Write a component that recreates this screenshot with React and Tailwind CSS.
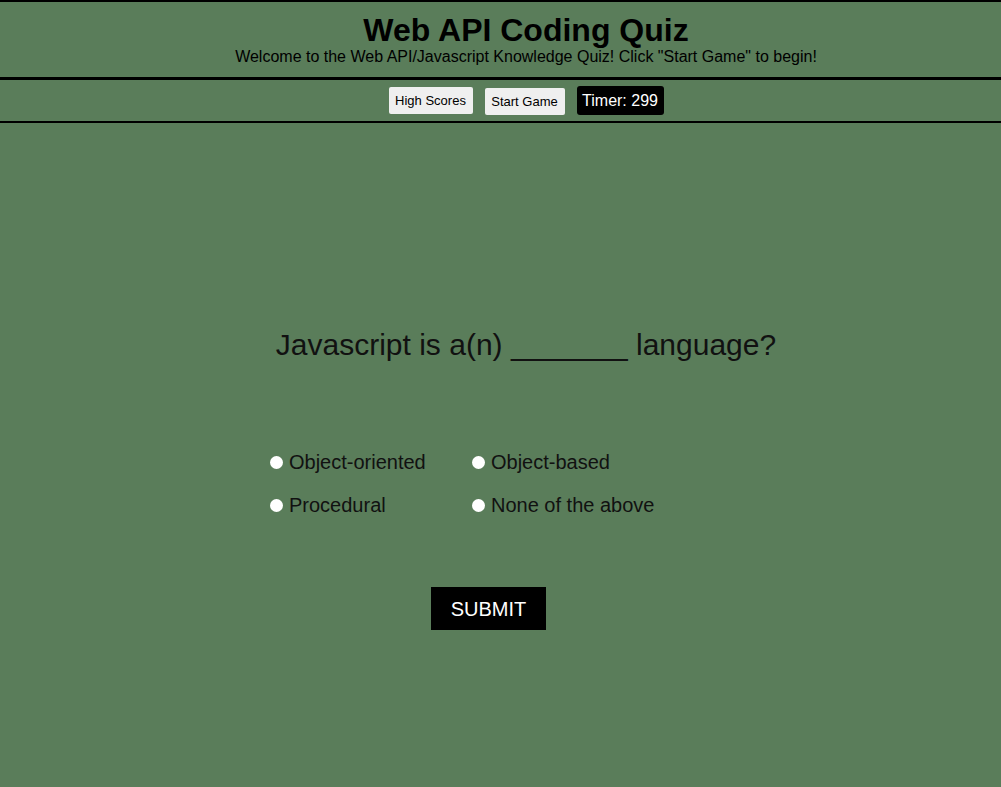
import React, { useState } from "react";

const options = [
  ["a", "Object-oriented"],
  ["b", "Object-based"],
  ["c", "Procedural"],
  ["d", "None of the above"],
];

const App = () => {
  const [answer, setAnswer] = useState("");

  return (
    <div className="min-h-screen bg-[#5a7d5a] text-black font-['Liberation_Sans',Arial,sans-serif]">
      <header className="border-t-2 border-b-[3px] border-black pt-[11px] pb-[10px] pl-[51px] text-center">
        <h1 className="text-[32px] font-bold leading-[34px]">Web API Coding Quiz</h1>
        <p className="text-base leading-[20px]">
          Welcome to the Web API/Javascript Knowledge Quiz! Click "Start Game" to begin!
        </p>
      </header>

      <nav className="flex items-center justify-center gap-[12px] border-b-2 border-black pl-[51px] h-[43px]">
        <button className="bg-[#efefef] text-[13px] w-[84px] h-[27px] rounded-[2px]">High Scores</button>
        <button className="bg-[#efefef] text-[13px] w-[80px] h-[27px] mt-[2px] rounded-[2px]">Start Game</button>
        <div className="bg-black text-white text-base w-[87px] h-[29px] flex items-center justify-center rounded-[3px]">
          Timer: 299
        </div>
      </nav>

      <main className="pl-[51px] pt-[202px]">
        <h2 className="text-center text-[30px] leading-[40px] text-[#111]">
          Javascript is a(n) _______ language?
        </h2>

        <div className="ml-[219px] mt-[85px] grid grid-cols-[202px_auto] gap-y-[19px] w-max">
          {options.map(([value, label]) => (
            <label key={value} className="flex items-center text-[20px] leading-[24px] text-[#111]">
              <input
                type="radio"
                name="answer"
                value={value}
                checked={answer === value}
                onChange={() => setAnswer(value)}
                className="w-[13px] h-[13px] mr-[6px] appearance-none rounded-full bg-white"
              />
              {label}
            </label>
          ))}
        </div>

        <div className="ml-[380px] mt-[70px]">
          <button className="bg-black text-white text-[20px] w-[115px] h-[43px]">SUBMIT</button>
        </div>
      </main>
    </div>
  );
};

export default App;
